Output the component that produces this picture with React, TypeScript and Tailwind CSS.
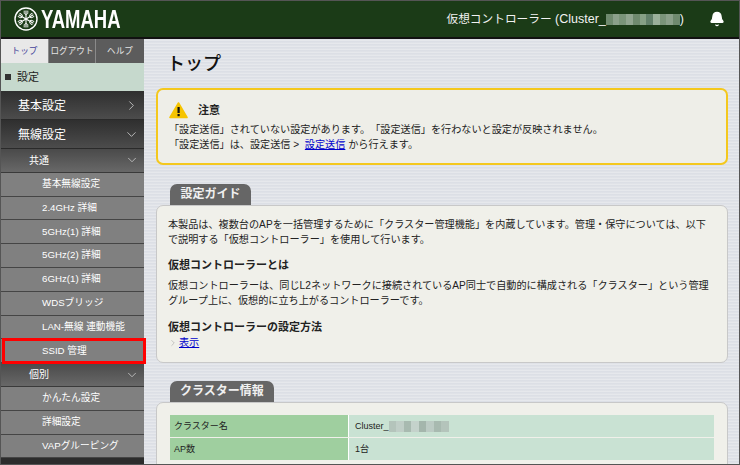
import { Bell, ChevronDown, ChevronRight } from "lucide-react"

const font = "font-['Liberation_Sans','Noto_Sans_CJK_JP',sans-serif] [text-spacing-trim:space-all]"
const subItems = ["基本無線設定", "2.4GHz 詳細", "5GHz(1) 詳細", "5GHz(2) 詳細", "6GHz(1) 詳細", "WDSブリッジ", "LAN-無線 連動機能"]
const subItems2 = ["かんたん設定", "詳細設定", "VAPグルーピング"]

function Mosaic({ colors, width }: { colors: string[]; width: string }) {
  return (
    <span className={`inline-flex h-[11px] overflow-hidden blur-[0.7px] ${width}`}>
      {colors.map((c, i) => (
        <span key={i} className="h-full flex-1" style={{ backgroundColor: c }} />
      ))}
    </span>
  )
}

function DarkRow({ label, open }: { label: string; open?: boolean }) {
  return (
    <div className="flex h-[29px] items-center justify-between border-b border-[#2a2a2a] bg-gradient-to-b from-[#2f2f2f] to-[#4c4c4c] pl-[17px] pr-[5px] pt-[1px] text-[12px] text-white">
      <span>{label}</span>
      {open ? <ChevronDown size={15} strokeWidth={1.2} color="#ddd" /> : <ChevronRight size={15} strokeWidth={1.2} color="#ddd" />}
    </div>
  )
}

function GroupRow({ label }: { label: string }) {
  return (
    <div className="flex h-[23.8px] items-center justify-between border-b border-[#3a3a3a] bg-gradient-to-b from-[#4a4a4a] to-[#686868] pl-[28px] pr-[5px] text-[10px] text-white">
      <span>{label}</span>
      <ChevronDown size={14} strokeWidth={1.2} color="#ddd" />
    </div>
  )
}

function SubRow({ label }: { label: string }) {
  return (
    <div className="flex h-[23.8px] items-center border-b border-[#454545] bg-[#808080] pl-[41px] text-[9.7px] text-white">
      {label}
    </div>
  )
}

function SectionTab({ label, width }: { label: string; width: string }) {
  return (
    <div className={`ml-[14px] flex h-[21px] items-center justify-center rounded-t-[7px] bg-[#666666] text-[12px] font-bold text-[#f0f0f0] ${width}`}>
      {label}
    </div>
  )
}

function Fork({ angle }: { angle: number }) {
  return (
    <g transform={`rotate(${angle} 12 12)`}>
      <path d="M12 3.5V20.5" strokeWidth="1.1" />
      <path d="M10.2 3.6v2.2c0 1 .8 1.6 1.8 1.6s1.8-.6 1.8-1.6V3.6" strokeWidth="0.9" />
      <path d="M10.2 20.4v-2.2c0-1 .8-1.6 1.8-1.6s1.8.6 1.8 1.6v2.2" strokeWidth="0.9" />
    </g>
  )
}

export default function App() {
  return (
    <div className={`${font} flex h-[465px] w-[740px] flex-col overflow-hidden border border-[#555]`}>
      <header className="flex h-[38px] shrink-0 items-center justify-between border-b-2 border-[#111] bg-[#1b3b17] pl-[13px] pr-[14px] text-white">
        <div className="flex items-center gap-[3px]">
          <svg width="24" height="24" viewBox="0 0 24 24" fill="none" stroke="#fff">
            <circle cx="12" cy="12" r="11" strokeWidth="1.4" />
            <Fork angle={0} />
            <Fork angle={60} />
            <Fork angle={120} />
          </svg>
          <span className="origin-left text-[25px] font-bold leading-none [transform:scaleX(0.74)]">YAMAHA</span>
        </div>
        <div className="flex items-center">
          <div className="flex items-center text-[12.5px] text-[#f2f2f2]">
            <span className="text-[11.7px]">仮想コントローラー</span>
            <span>&nbsp;(Cluster_</span>
            <Mosaic
              width="w-[74px]"
              colors={["#6f8a6e", "#8ba08a", "#7a9479", "#91a590", "#6f8a6e", "#86a085", "#62806a", "#9ab09a", "#7a9479", "#8ba08a", "#6f8a6e"]}
            />
            <span>)</span>
          </div>
          <Bell size={16} fill="#fff" color="#fff" className="ml-[25px]" />
        </div>
      </header>

      <div className="flex min-h-0 flex-1">
        <aside className="w-[143px] shrink-0 bg-[#2c2c2c]">
          <div className="flex h-[24px] text-[8.6px]">
            <div className="flex w-[47px] items-center justify-center bg-[#e8e8e8] text-[#44449a]">トップ</div>
            <div className="flex w-[48px] items-center justify-center border-x border-[#8a8a8a] bg-[#5c5c5c] text-[#e4e4e4]">ログアウト</div>
            <div className="flex w-[48px] items-center justify-center bg-[#5c5c5c] text-[#e4e4e4]">ヘルプ</div>
          </div>
          <div className="flex h-[28px] items-center gap-[6px] bg-[#c6d9cd] pl-[4px] text-[11px] text-[#222]">
            <span className="h-[6px] w-[6px] bg-[#333]" />
            <span>設定</span>
          </div>
          <DarkRow label="基本設定" />
          <DarkRow label="無線設定" open />
          <GroupRow label="共通" />
          {subItems.map((item) => (
            <SubRow key={item} label={item} />
          ))}
          <div className="relative">
            <SubRow label="SSID 管理" />
            <div className="absolute -top-[1px] bottom-[-1px] left-[1px] right-[-2px] border-[3px] border-[#ff0000]" />
          </div>
          <GroupRow label="個別" />
          {subItems2.map((item) => (
            <SubRow key={item} label={item} />
          ))}
        </aside>

        <main className="min-w-0 flex-1 overflow-hidden bg-[#dfe2e8] bg-[repeating-linear-gradient(0deg,#e6e8ec_0px,#e6e8ec_1px,#d9dce3_2px,#dfe2e8_3px)] pl-[12px] pr-[11px] text-[10.13px] leading-[15px] text-[#222]">
          <h1 className="ml-[11px] mt-[12px] h-[37px] text-[18px] font-medium leading-[26px] text-[#111]">トップ</h1>

          <section className="h-[77px] rounded-[7px] border-2 border-[#f4c81e] bg-[#eeeee8] pl-[11px] pt-[10px]">
            <div className="flex h-[21px] items-center gap-[10px]">
              <svg width="19" height="17" viewBox="0 0 19 17">
                <path d="M9.5 1 L18 15.5 H1 Z" fill="#f6c400" stroke="#f6c400" strokeWidth="1.6" strokeLinejoin="round" />
                <rect x="8.5" y="5" width="2.2" height="6" fill="#111" />
                <rect x="8.5" y="12" width="2.2" height="2.2" fill="#111" />
              </svg>
              <span className="text-[11px] font-bold">注意</span>
            </div>
            <p className="mt-[1px]">「設定送信」されていない設定があります。「設定送信」を行わないと設定が反映されません。</p>
            <p>
              「設定送信」は、設定送信&nbsp;&gt;&nbsp;&nbsp;<a className="text-[#0000cc] underline">設定送信</a> から行えます。
            </p>
          </section>

          <div className="mt-[19px]">
            <SectionTab label="設定ガイド" width="w-[81px]" />
            <section className="h-[158px] rounded-[7px] border border-[#c8c8c8] bg-[#f0f0ea] pl-[11px] pr-[16px] pt-[11px]">
              <p>
                本製品は、複数台のAPを一括管理するために「クラスター管理機能」を内蔵しています。管理・保守については、以下で説明する「仮想コントローラー」を使用して行います。
              </p>
              <h3 className="mt-[10px] text-[11px] font-bold leading-[16px]">仮想コントローラーとは</h3>
              <p className="mt-[5px]">
                仮想コントローラーは、同じL2ネットワークに接続されているAP同士で自動的に構成される「クラスター」という管理グループ上に、仮想的に立ち上がるコントローラーです。
              </p>
              <h3 className="mt-[11px] text-[11px] font-bold leading-[16px]">仮想コントローラーの設定方法</h3>
              <div className="flex items-center gap-[1px]">
                <ChevronRight size={10} strokeWidth={1.2} color="#999" />
                <a className="text-[#0000cc] underline">表示</a>
              </div>
            </section>
          </div>

          <div className="mt-[18px]">
            <SectionTab label="クラスター情報" width="w-[104px]" />
            <section className="h-[70px] rounded-t-[7px] border border-[#c8c8c8] bg-[#f0f0ea] px-[13px] pt-[12px] text-[9px]">
              <div className="grid grid-cols-[179px_1fr] gap-y-[1px]">
                <div className="flex h-[22px] items-center border-r border-white bg-[#9fcf9f] pl-[4px]">クラスター名</div>
                <div className="flex h-[22px] items-center bg-[#c9e2d3] pl-[6px]">
                  <span>Cluster_</span>
                  <Mosaic width="w-[60px]" colors={["#b4c4bb", "#c0cec7", "#a8bab0", "#c4d2cb", "#a4b6ac", "#bccbc4", "#a8bab0", "#b4c4bb"]} />
                </div>
                <div className="flex h-[22px] items-center border-r border-white bg-[#9fcf9f] pl-[4px]">AP数</div>
                <div className="flex h-[22px] items-center bg-[#c9e2d3] pl-[6px]">1台</div>
              </div>
            </section>
          </div>
        </main>
      </div>
    </div>
  )
}
